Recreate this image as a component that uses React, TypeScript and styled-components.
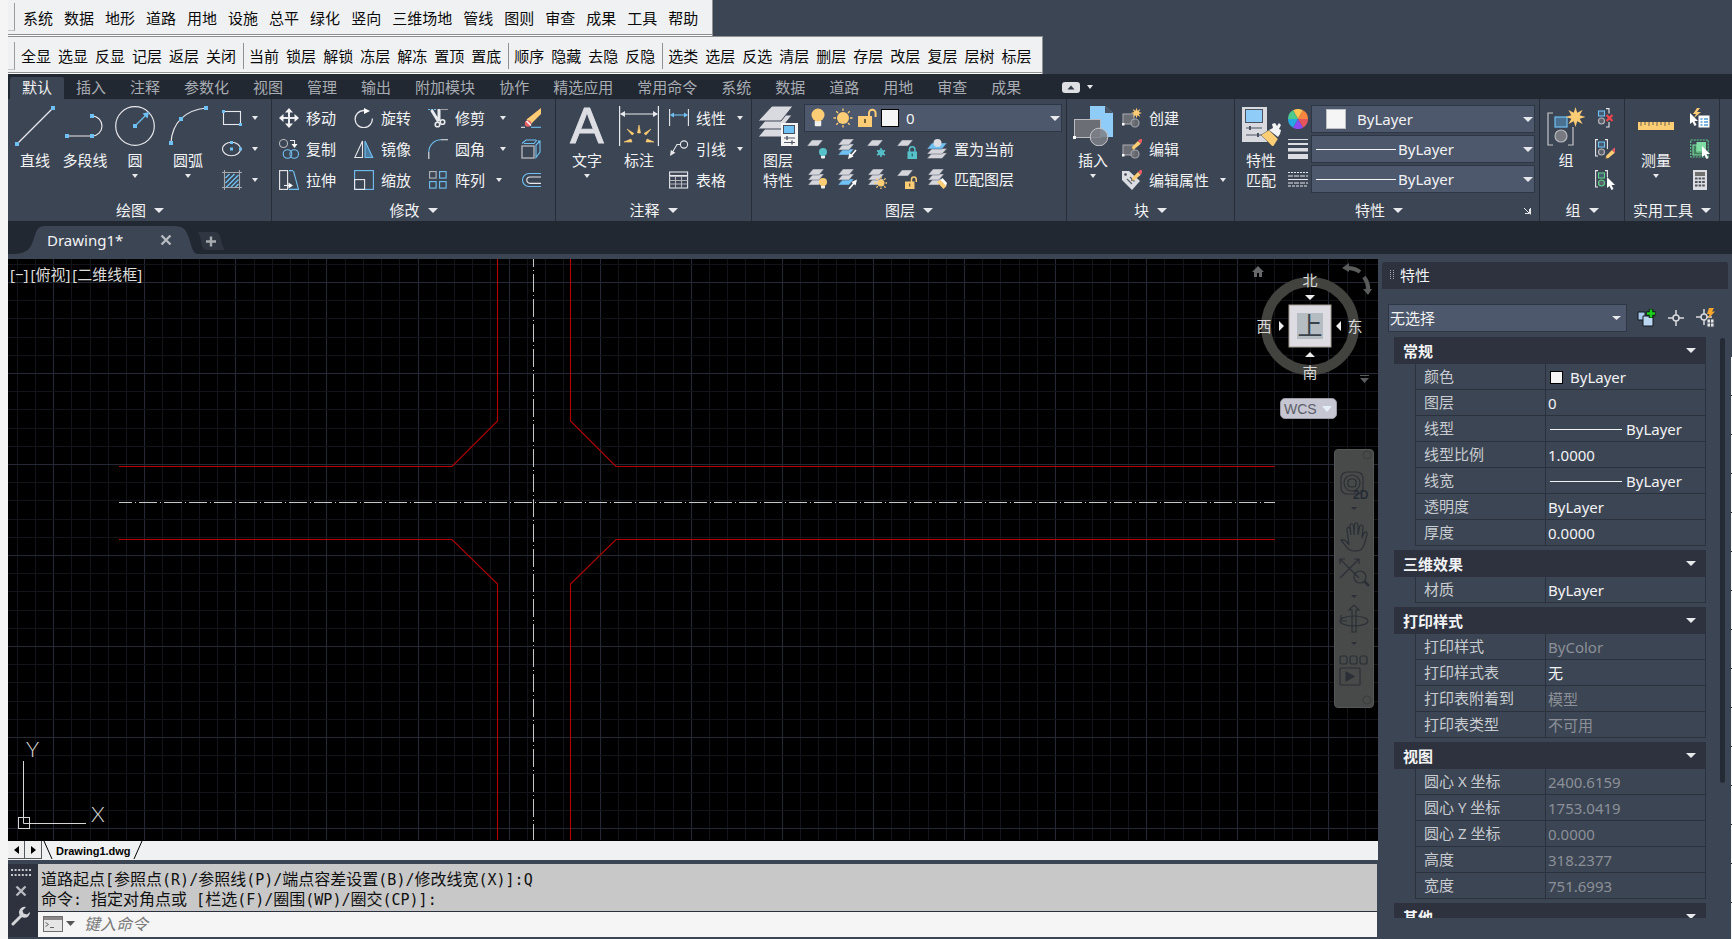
import React from "react";
import styled, { createGlobalStyle } from "styled-components";

const UI_FONT = `"Noto Sans", "Noto Sans CJK SC", sans-serif`;
const c = {
  base: "#3c4553",
  dark: "#222831",
  line: "#262d38",
  header: "#2d323e",
  field: "#4d586c",
  paper: "#f0f1f3",
  white: "#e8e9ed",
  blue: "#70c1f3",
  yellow: "#fccd75",
  grey: "#8b8e95",
  text: "#f2f3f5",
  muted: "#a8acb3",
};

const GlobalStyle = createGlobalStyle`
  * { box-sizing: border-box; }
  body { margin: 0; background: #f5f5f5; font-family: ${UI_FONT}; font-size: 15px; }
  button, select, input { font: inherit; color: inherit; border: 0; padding: 0; margin: 0; background: none; }
  button { cursor: pointer; white-space: nowrap; }
  svg { display: block; flex: none; }
`;

/* ---------- shell ---------- */

const Shell = styled.div`
  height: 100vh;
  min-height: 600px;
  padding-left: 8px;
  display: flex;
  flex-direction: column;
  background: linear-gradient(to right, #f5f5f5 8px, ${c.base} 8px);
  color: ${c.text};
  overflow: hidden;
`;

const Toolbar = styled.nav<{ $end: number }>`
  align-self: flex-start;
  display: flex;
  align-items: center;
  height: ${(p) => (p.$end > 12 ? 36 : 38)}px;
  padding-right: ${(p) => p.$end}px;
  padding-bottom: ${(p) => (p.$end > 12 ? 2 : 0)}px;
  background: ${c.paper};
  color: #0a0a0a;
  border-right: 1px solid #8f9092;
  box-shadow: inset 0 -1px #fafafa, inset 0 -2px #8f9092;
  border-top: ${(p) => (p.$end > 12 ? "0" : "1px solid #8f9092")};
`;

const Grip = styled.span`
  width: 7px;
  height: 28px;
  border-right: 1px solid #9b9c9e;
  border-bottom: 1px solid #c4c5c7;
`;

const MenuItems = styled.div`
  display: flex;
  gap: 11px;
  padding-left: 8px;
`;

const LayerTools = styled.div`
  display: flex;
  padding-left: 1px;
`;

const ToolGroup = styled.div`
  display: flex;
  gap: 7px;
  padding: 0 7px 0 5px;
  line-height: 26px;
  & + & {
    border-left: 1px solid #8f9092;
  }
  &:last-child {
    padding-right: 0;
  }
`;

/* ---------- ribbon ---------- */

const RibbonTabs = styled.div`
  display: flex;
  align-items: flex-end;
  height: 25px;
  flex: none;
  padding-left: 2px;
  background: ${c.dark};
`;

const RibbonTab = styled.button<{ $active?: boolean }>`
  height: 22px;
  padding: 0 12px 2px;
  line-height: 20px;
  border-radius: 2px 2px 0 0;
  color: ${(p) => (p.$active ? c.text : c.muted)};
  background: ${(p) => (p.$active ? c.base : "transparent")};
`;

const TabsMenu = styled.button`
  display: flex;
  align-items: center;
  gap: 7px;
  height: 22px;
  padding-bottom: 2px;
  margin-left: 29px;
`;

const Ribbon = styled.div`
  display: flex;
  flex: none;
  height: 122px;
  padding-left: 1px;
  background: ${c.base};
`;

const Panel = styled.section<{ $w: number }>`
  display: flex;
  flex-direction: column;
  flex: none;
  width: ${(p) => p.$w}px;
  border-right: 1px solid ${c.line};
`;

const PanelBody = styled.div<{ $pad?: number }>`
  display: flex;
  flex: 1;
  padding-left: ${(p) => p.$pad ?? 0}px;
`;

const PanelTitle = styled.button`
  display: flex;
  align-items: center;
  justify-content: center;
  gap: 8px;
  flex: 1;
  height: 21px;
  line-height: 21px;
`;

const PanelFoot = styled.div`
  display: flex;
  align-items: center;
`;

const Launcher = styled.button`
  width: 16px;
`;

const BigButton = styled.button<{ $w: number }>`
  display: flex;
  flex-direction: column;
  align-items: center;
  width: ${(p) => p.$w}px;
  flex: none;
  padding-top: 7px;
  line-height: 20px;
  & > svg:first-child {
    margin-bottom: 4px;
  }
`;

const BigCaret = styled.span`
  padding-top: 4px;
`;

const SmallColumn = styled.div<{ $w?: number; $left?: number; $row?: number; $top?: number }>`
  display: flex;
  flex-direction: column;
  flex: none;
  padding-top: ${(p) => p.$top ?? 3}px;
  margin-left: ${(p) => p.$left ?? 0}px;
  width: ${(p) => (p.$w ? p.$w + "px" : "auto")};
  & > * {
    height: ${(p) => p.$row ?? 31}px;
  }
`;

const SmallButton = styled.button`
  display: flex;
  align-items: center;
  gap: 7px;
`;

const CaretSlot = styled.span<{ $gap: number }>`
  margin-left: ${(p) => p.$gap}px;
`;

const FieldStack = styled.div<{ $top: number; $left: number }>`
  display: flex;
  flex-direction: column;
  flex: 1;
  gap: 2px;
  padding: ${(p) => p.$top}px 4px 0 0;
  margin-left: ${(p) => p.$left}px;
`;

const IconRow = styled.div`
  display: flex;
  align-items: center;
  gap: 10px;
  height: 29px;
  padding-left: 3px;
  & + & {
    height: 31px;
  }
`;

const Combo = styled.label<{ $pad?: number; $gap?: number }>`
  display: flex;
  align-items: center;
  gap: ${(p) => p.$gap ?? 2}px;
  height: 28px;
  padding: 0 1px 0 ${(p) => p.$pad ?? 4}px;
  background: ${c.field};
  border: 1px solid #2d3644;
`;

const ComboSelect = styled.select`
  appearance: none;
  flex: 1;
  min-width: 0;
  height: 26px;
  color: ${c.text};
  outline: none;
`;

const LayerSelect = styled(ComboSelect)`
  padding-left: 3px;
`;

const Swatch = styled.span<{ $size: number; $edge: string }>`
  flex: none;
  width: ${(p) => p.$size}px;
  height: ${(p) => p.$size}px;
  background: #f5f5f5;
  border: 1px solid ${(p) => p.$edge};
`;

const LineSample = styled.span<{ $w: number }>`
  flex: none;
  width: ${(p) => p.$w}px;
  height: 1px;
  background: ${c.text};
`;

/* ---------- document tabs ---------- */

const DocTabs = styled.div`
  display: flex;
  align-items: flex-end;
  flex: none;
  height: 38px;
  background: ${c.dark};
  border-bottom: 5px solid ${c.base};
`;

const DocTab = styled.div`
  position: relative;
  display: flex;
  align-items: center;
  width: 190px;
  height: 28px;
  padding: 0 26px 0 39px;
  justify-content: space-between;
`;

const DocTabShape = styled.svg`
  position: absolute;
  inset: 0;
`;

const DocName = styled.span`
  position: relative;
`;

const CloseDoc = styled.button`
  position: relative;
`;

/* ---------- work area ---------- */

const Work = styled.div`
  display: flex;
  flex: 1;
  min-height: 0;
`;

const LeftSide = styled.div`
  display: flex;
  flex-direction: column;
  flex: 1;
  min-width: 0;
`;

const Viewport = styled.main`
  position: relative;
  flex: 1;
  min-height: 0;
  background: #000;
  overflow: hidden;
`;

const Drawing = styled.svg`
  width: 100%;
  height: 100%;
`;

const ViewLabel = styled.div`
  position: absolute;
  left: 2px;
  top: 4px;
  display: flex;
  gap: 2px;
  line-height: 22px;
  color: #dcdcdc;
`;

const Cube = styled.svg`
  position: absolute;
  top: 0;
  right: 0;
`;

const Wcs = styled.button`
  position: absolute;
  top: 139px;
  right: 41px;
  display: flex;
  align-items: center;
  justify-content: space-between;
  width: 57px;
  height: 21px;
  padding: 0 4px 0 3px;
  border-radius: 5px;
  border: 1px solid #9a9aa4;
  background: #c6c7d2;
  color: #5c5d68;
  font: 14px "Liberation Sans", sans-serif;
`;

const NavBar = styled.div`
  position: absolute;
  top: 190px;
  right: 4px;
  width: 40px;
  height: 259px;
  border-radius: 4px;
  background: #484949;
  border: 1px solid #555756;
`;

const LayoutBar = styled.div`
  display: flex;
  flex: none;
  height: 20px;
  background: ${c.paper};
  border-top: 1px solid #000;
  color: #000;
`;

const LayoutArrow = styled.button`
  display: flex;
  align-items: center;
  justify-content: center;
  width: 17px;
  height: 18px;
  background: #efefef;
  border-right: 1px solid #55585d;
  border-bottom: 1px solid #55585d;
`;

const LayoutTab = styled.button`
  display: flex;
  align-items: center;
  font: bold 11px "Liberation Sans", sans-serif;
`;

/* ---------- command line ---------- */

const Command = styled.section`
  display: flex;
  flex: none;
  height: 79px;
  padding: 4px 1px 2px 0;
`;

const CommandRail = styled.div`
  display: flex;
  flex-direction: column;
  align-items: center;
  gap: 9px;
  width: 30px;
  padding: 5px 4px 0 0;
  background: ${c.header};
`;

const CommandMain = styled.div`
  display: flex;
  flex-direction: column;
  flex: 1;
  min-width: 0;
`;

const History = styled.div`
  height: 48px;
  padding: 6px 3px 0;
  background: #c8c8c8;
  border-bottom: 1px solid #2b313c;
  color: #101010;
  font-size: 16px;
  line-height: 19px;
  white-space: pre;
`;

const Mono = styled.span`
  font-family: "DejaVu Sans Mono", monospace;
  font-size: 15px;
`;

const Prompt = styled.label`
  display: flex;
  align-items: center;
  gap: 3px;
  flex: 1;
  padding: 0 0 2px 5px;
  background: #f5f5f5;
`;

const PromptInput = styled.input`
  flex: 1;
  padding-left: 6px;
  font-size: 16px;
  font-style: italic;
  color: #333;
  outline: none;
  &::placeholder {
    color: #7a7a7a;
    opacity: 1;
  }
`;

/* ---------- properties palette ---------- */

const Palette = styled.aside`
  position: relative;
  display: flex;
  flex-direction: column;
  flex: none;
  width: 354px;
  padding: 3px 0 21px 4px;
  background: ${c.base};
  &::after {
    content: "";
    position: absolute;
    top: 98px;
    right: 0;
    bottom: 0;
    width: 1px;
    background: repeating-linear-gradient(#f5f5f5 0 38px, #222 38px 39px);
  }
`;

const PaletteTitle = styled.h2`
  display: flex;
  align-items: center;
  gap: 6px;
  flex: none;
  height: 27px;
  margin: 0 4px 15px 0;
  padding: 0 0 2px 8px;
  border-radius: 3px 3px 0 0;
  background: ${c.header};
  font-size: 15px;
  font-weight: 400;
`;

const PickRow = styled.div`
  display: flex;
  align-items: center;
  gap: 10px;
  flex: none;
  margin-bottom: 5px;
  padding-left: 6px;
`;

const PickCombo = styled(Combo)`
  width: 239px;
  padding: 0 5px 1px 1px;
`;

const PropArea = styled.div`
  display: flex;
  flex: 1;
  min-height: 0;
  padding-left: 12px;
`;

const PropList = styled.div`
  width: 312px;
  overflow: hidden;
`;

const ScrollThumb = styled.div`
  width: 5px;
  height: 445px;
  max-height: 77%;
  margin: 1px 0 0 14px;
  border-radius: 3px;
  background: #252b35;
`;

const SectionHead = styled.button`
  display: flex;
  align-items: center;
  justify-content: space-between;
  width: 100%;
  height: 27px;
  padding: 0 10px 1px 9px;
  background: ${c.header};
  font-weight: 700;
  color: ${c.text};
`;

const PropTable = styled.table`
  width: 291px;
  margin: 0 0 4px 21px;
  table-layout: fixed;
  border-spacing: 0;
  border-left: 1px solid #2b323d;
`;

const PropName = styled.th`
  width: 130px;
  height: 26px;
  padding: 0 0 2px 8px;
  line-height: 22px;
  text-align: left;
  font-weight: 400;
  color: #c8ccd1;
  border-right: 1px solid #2b323d;
  border-bottom: 1px solid #2b323d;
`;

const PropValue = styled.td<{ $off?: boolean }>`
  height: 26px;
  padding: 1px 0 0 2px;
  line-height: 22px;
  color: ${(p) => (p.$off ? "#8b9098" : c.text)};
  border-right: 1px solid #2b323d;
  border-bottom: 1px solid #2b323d;
`;

const ValueInner = styled.span<{ $gap: number }>`
  display: flex;
  align-items: center;
  gap: ${(p) => p.$gap}px;
  padding-left: 2px;
`;

/* ---------- icons ---------- */

const Caret = ({ w = 6, h = 4, fill = c.white }: { w?: number; h?: number; fill?: string }) => (
  <svg width={w} height={h} viewBox="0 0 10 6" preserveAspectRatio="none" fill={fill}>
    <path d="M0 0h10L5 6z" />
  </svg>
);

const Big = ({ children }: { children: React.ReactNode }) => (
  <svg width="40" height="40" viewBox="0 0 40 40" fill="none" stroke={c.white} strokeWidth="1.2">
    {children}
  </svg>
);

const Small = ({ children }: { children: React.ReactNode }) => (
  <svg width="20" height="20" viewBox="0 0 20 20" fill="none" stroke={c.white} strokeWidth="1.1">
    {children}
  </svg>
);

const Dot = ({ x, y, s = 4 }: { x: number; y: number; s?: number }) => (
  <rect x={x - s / 2} y={y - s / 2} width={s} height={s} fill={c.blue} stroke="none" />
);

const sun = (x: number, y: number, r: number, s: number) => (
  <g>
    <circle cx={x} cy={y} r={r} fill={c.yellow} stroke="none" />
    <path
      d={[0, 45, 90, 135, 180, 225, 270, 315]
        .map((a) => {
          const t = (a * Math.PI) / 180;
          return `M${x + Math.cos(t) * (r + 1)} ${y + Math.sin(t) * (r + 1)}L${x + Math.cos(t) * s} ${y + Math.sin(t) * s}`;
        })
        .join("")}
      stroke={c.yellow}
      strokeWidth="1.3"
    />
  </g>
);

const star = (x: number, y: number, R: number, r: number, n = 8) => (
  <path
    d={
      Array.from({ length: n * 2 }, (_, i) => {
        const t = (i * Math.PI) / n - Math.PI / 2;
        const q = i % 2 ? r : R;
        return `${i ? "L" : "M"}${x + Math.cos(t) * q} ${y + Math.sin(t) * q}`;
      }).join("") + "z"
    }
    fill={c.yellow}
    stroke="none"
  />
);

const sheet = (x: number, y: number, fill = "#d5d6dc") => (
  <path d={`M${x + 5} ${y}h11l-5 6h-11z`} fill={fill} stroke="#4a5160" strokeWidth=".5" />
);

const bulb = (x: number, y: number, r: number, fill: string) => (
  <g stroke="none">
    <rect x={x - r / 2} y={y + r - 1} width={r} height={r * 0.9} rx="1" fill="#f0f0f0" />
    <circle cx={x} cy={y} r={r} fill={fill} />
  </g>
);

const LineIcon = () => (
  <Big>
    <path d="M2 38L38 2" />
    <Dot x={2} y={38} />
    <Dot x={38} y={2} />
  </Big>
);
const PolylineIcon = () => (
  <Big>
    <path d="M2 30h25a10 10 0 0 0 0-20" />
    <Dot x={2} y={30} />
    <Dot x={27} y={30} />
    <Dot x={27} y={10} />
  </Big>
);
const CircleIcon = () => (
  <Big>
    <circle cx="20" cy="20" r="19.3" />
    <path d="M20 20L31 9" stroke={c.blue} />
    <path d="M34 6l-1.500 6.500-5-5z" fill={c.blue} stroke="none" />
    <Dot x={20} y={20} />
  </Big>
);
const ArcIcon = () => (
  <Big>
    <path d="M3 37C4 16 18 4 38 2" />
    <Dot x={3} y={37} />
    <Dot x={13} y={13} />
    <Dot x={38} y={2} />
  </Big>
);
const RectIcon = () => (
  <Small>
    <rect x="1.500" y="3.500" width="17" height="13" />
    <Dot x={1.5} y={3.5} s={3} />
    <Dot x={18.5} y={16.5} s={3} />
  </Small>
);
const EllipseIcon = () => (
  <Small>
    <ellipse cx="9.500" cy="10" rx="9" ry="6.800" />
    <Dot x={9.5} y={3.5} s={3} />
    <Dot x={9.5} y={10} s={3} />
    <Dot x={18.5} y={10} s={3} />
  </Small>
);
const HatchIcon = () => (
  <Small>
    <path d="M3.500 8l4-4M3.500 13l9-9M4 17.500L16.500 5M9 17l7.500-7.500M13 17.500l3.500-3.500" stroke={c.blue} strokeWidth="1.400" />
    <path d="M0 2.500h20M0 17.500h20M2.500 0v20M17.500 0v20" stroke="#a6a8ad" />
  </Small>
);
const MoveIcon = () => (
  <Small>
    <path d="M10 2v16M2 10h16" strokeWidth="2" />
    <path d="M10 0l4 4.500H6zM10 20l4-4.500H6zM0 10l4.500-4v8zM20 10l-4.500-4v8z" fill="#f4f4f4" stroke="none" />
  </Small>
);
const CopyIcon = () => (
  <Small>
    <circle cx="4.500" cy="4.500" r="4" stroke="#b5b7bc" />
    <path d="M11 1.500h4.500V6" />
    <path d="M12.500 5h6l-3 4z" fill="#fff" stroke="none" />
    <circle cx="8.500" cy="15" r="4.300" stroke={c.blue} />
    <circle cx="15.200" cy="15" r="4.300" stroke={c.blue} />
  </Small>
);
const StretchIcon = () => (
  <Small>
    <rect x=".600" y=".600" width="8" height="18.800" />
    <path d="M10 .600h4M14.500 1l5 18.400H10" stroke={c.blue} />
    <path d="M5 15.500h6" />
    <path d="M9.500 12.500l4.500 3-4.500 3z" fill="#fff" stroke="none" />
  </Small>
);
const RotateIcon = () => (
  <Small>
    <path d="M12 2.500H9.500a8.600 8.600 0 1 0 8.800 8" strokeWidth="1.300" />
    <path d="M10 0l6 3-6 3z" fill="#fff" stroke="none" />
  </Small>
);
const MirrorIcon = () => (
  <Small>
    <path d="M8.500 2v16.500H.800z" />
    <path d="M11 2v16.500h7.700z" stroke={c.blue} fill="#4c7ea5" />
  </Small>
);
const ScaleIcon = () => (
  <Small>
    <rect x=".600" y=".600" width="18.800" height="18.800" stroke={c.blue} />
    <rect x=".600" y="9.600" width="10" height="9.800" />
  </Small>
);
const TrimIcon = () => (
  <Small>
    <path d="M0 1.500h9" stroke={c.blue} strokeDasharray="2 1" />
    <path d="M13 1.500h7" stroke="#9b9da3" />
    <path d="M3.500 2l7 11.500M11 1v12" strokeWidth="3" />
    <circle cx="9.500" cy="16.500" r="2.300" strokeWidth="1.600" />
    <circle cx="14.500" cy="14" r="2.300" strokeWidth="1.600" />
  </Small>
);
const FilletIcon = () => (
  <Small>
    <path d="M.800 20v-7M13 .800h7" />
    <path d="M.800 13A12.200 12.200 0 0 1 13 .800" stroke={c.blue} />
  </Small>
);
const ArrayIcon = () => (
  <Small>
    <rect x="1.600" y="1.600" width="6.500" height="6.500" stroke="#b5b7bc" />
    <rect x="11.600" y="1.600" width="6.500" height="6.500" stroke={c.blue} />
    <rect x="1.600" y="11.600" width="6.500" height="6.500" stroke={c.blue} />
    <rect x="11.600" y="11.600" width="6.500" height="6.500" stroke={c.blue} />
  </Small>
);
const EraseIcon = () => (
  <Small>
    <path d="M20 0v6l-10 10-4.500-4.500z" fill={c.yellow} stroke="none" />
    <circle cx="7" cy="15.500" r="3.200" fill="#ec6168" stroke="none" />
    <path d="M5.500 13l4.500 4.500" stroke="#fff" strokeWidth="1.400" />
    <path d="M0 19.300h4" />
    <path d="M10 19.300h10" stroke={c.blue} />
  </Small>
);
const ExplodeIcon = () => (
  <Small>
    <rect x="1" y="7" width="12" height="12" strokeWidth="1.500" stroke="#a9abb1" />
    <path d="M1 4.500L5 1h10M17 2h2v11l-4 5.500V6L19 2M3 4.500h10l3-3.500" stroke={c.blue} />
  </Small>
);
const OffsetIcon = () => (
  <Small>
    <path d="M20 3.500H8a6.500 6.500 0 0 0 0 13h12" stroke={c.blue} />
    <path d="M20 7H9a3.200 3.200 0 0 0 0 6.400h11" />
  </Small>
);
const LetterSvg = styled.svg`
  overflow: visible;
`;
const TextIcon = () => (
  <LetterSvg width="40" height="40" viewBox="0 0 40 40">
    <text
      x="20"
      y="37"
      textAnchor="middle"
      fontFamily="Liberation Sans, sans-serif"
      fontSize="50"
      fill="#dddee3"
      stroke="#dddee3"
      strokeWidth="1"
    >
      A
    </text>
  </LetterSvg>
);
const DimIcon = () => (
  <Big>
    <path d="M.600 0v40M39.400 0v40M2 8h36" />
    <path d="M1 8l5-3v6zM39 8l-5-3v6z" fill={c.white} stroke="none" />
    <path
      d="M18.500 27l1.500-8 1.500 8zM13 29l-5-6 7 4.500zM27 29l5-6-7 4.500zM12 33l-7 3h8zM28 33l7 3h-8z"
      fill={c.yellow}
      stroke={c.yellow}
      strokeWidth=".600"
    />
  </Big>
);
const LinearIcon = () => (
  <Small>
    <path d="M.600 1v17M19.400 1v17" />
    <path d="M2 7h16" stroke={c.blue} />
    <path d="M1 7l4-2.500v5zM19 7l-4-2.500v5z" fill={c.blue} stroke="none" />
  </Small>
);
const LeaderIcon = () => (
  <Small>
    <circle cx="15" cy="5.500" r="3.600" />
    <path d="M11.400 5.500H8L3 14" />
    <path d="M1 17l.800-6 4.600 2.800z" fill={c.white} stroke="none" />
  </Small>
);
const TableIcon = () => (
  <Small>
    <rect x=".600" y="2" width="18" height="16" />
    <path d="M.600 6.500h18M.600 10.500h18M.600 14h18M6.500 6.500V18M12.500 6.500V18" stroke="#b4b6bb" />
    <path d="M.600 5.500h18" />
  </Small>
);
const LayerPropsIcon = () => (
  <svg width="40" height="40" viewBox="0 0 40 40">
    <g fill="#d9dae0" stroke={c.base} strokeWidth="1">
      <path d="M12 17h22L23 31H0z" />
      <path d="M12 9h22L23 23H0z" />
      <path d="M14 0h21L23 15H0z" />
    </g>
    <rect x="23" y="17" width="17" height="23" fill="#f4f4f5" />
    <rect x="25.500" y="19.500" width="11" height="8" fill={c.blue} stroke="#47505e" />
    <path d="M26 32h11M26 36.500h11" stroke="#555d69" />
    <path d="M29 30v4M34 34.500v4" stroke="#555d69" strokeWidth="1.500" />
  </svg>
);
const InsertIcon = () => (
  <svg width="40" height="40" viewBox="0 0 40 40">
    <path d="M17 0h15l8 7v24H17z" fill="#8fccf7" />
    <path d="M32 0v7h8z" fill="#4a5361" />
    <rect x="1.500" y="13.500" width="26" height="18" fill="#6b6e74" stroke="#b9bbc0" />
    <circle cx="26" cy="31" r="8.800" fill="#7d8087" fillOpacity=".85" stroke="#c3c5ca" />
    <rect x="0" y="30" width="3" height="3" fill="#fff" />
  </svg>
);
const BlockShape = () => (
  <g>
    <rect x="1" y="6" width="11" height="10" fill="#6b6e74" stroke="#a5a7ad" />
    <circle cx="13" cy="15" r="4" fill="#6b6e74" fillOpacity=".8" stroke="#a5a7ad" />
    <rect x="0" y="15" width="2.500" height="2.500" fill="#fff" stroke="none" />
  </g>
);
const Pencil = () => (
  <g stroke="none">
    <path d="M9 11l1.500-3.500L16 2l2.800 2.800L12.500 10z" fill={c.yellow} />
    <path d="M16 2l1.500-1.500a1.500 1.500 0 0 1 2.500 2L18.800 4.800z" fill="#ee5a62" />
    <path d="M9 11l.800-2 1.200 1.200z" fill="#333" />
  </g>
);
const CreateIcon = () => (
  <Small>
    <BlockShape />
    {star(14.5, 5, 5.5, 2.5)}
  </Small>
);
const EditIcon = () => (
  <Small>
    <BlockShape />
    <Pencil />
  </Small>
);
const AttrIcon = () => (
  <Small>
    <path d="M0 1h7l11 10-8 9L0 10z" fill="#dcdde2" stroke="none" />
    <circle cx="3.500" cy="4.500" r="1.300" fill={c.base} stroke="none" />
    <path d="M5 9l5 5M8 7l4.500 4.500" stroke="#555d69" />
    <Pencil />
  </Small>
);
const MatchIcon = () => (
  <svg width="40" height="40" viewBox="0 0 40 40">
    <rect x="1" y="1" width="25" height="35" fill="#d9dae0" />
    <rect x="4.500" y="3.500" width="17" height="13" fill="#8fccf7" stroke="#4b5361" />
    <path d="M5 22h16M5 29h16" stroke="#4b5361" />
    <path d="M9 20v4M17 27v4" stroke="#4b5361" strokeWidth="2" />
    <path d="M20 29l8-5 9 9-5 8z" fill={c.yellow} stroke="#4b5361" strokeWidth=".500" />
    <path d="M28 24l4-2-1-4 3-1 2 3 2-3 2 2-2 4 2 1-1 4-2 3z" fill="#f4f4f4" />
  </svg>
);
const wheel = ["#fdc353", "#f9863f", "#e5565c", "#8c4bf2", "#27a8e0", "#4cc98b"];
const WheelIcon = () => (
  <svg width="20" height="20" viewBox="-10 -10 20 20">
    {wheel.map((fill, i) => {
      const a = ((i * 60 - 120) * Math.PI) / 180;
      const b = ((i * 60 - 60) * Math.PI) / 180;
      return (
        <path key={fill} fill={fill} d={`M0 0L${Math.cos(a) * 10} ${Math.sin(a) * 10}A10 10 0 0 1 ${Math.cos(b) * 10} ${Math.sin(b) * 10}z`} />
      );
    })}
  </svg>
);
const WeightIcon = () => (
  <svg width="20" height="20" viewBox="0 0 20 20" fill="#dcdde2">
    <path d="M0 0h20v1H0zM0 4h20v2H0zM0 9h20v3.500H0zM0 15h20v5H0z" />
  </svg>
);
const TypeIcon = () => (
  <Small>
    <path d="M0 3.500h20" strokeDasharray="2 1" />
    <path d="M0 7h20" strokeDasharray="5 1" />
    <path d="M0 10.500h20" />
    <path d="M0 14h20" strokeDasharray="5 1" />
    <path d="M0 17h20" strokeDasharray="3 1" />
  </Small>
);
const GroupIcon = () => (
  <Big>
    <path d="M7 7H2v32h5M22 39h5V21" stroke="#c3c5ca" />
    <rect x="9" y="11" width="12" height="10" fill="#4b7192" stroke={c.blue} />
    <circle cx="15" cy="30" r="6" fill="#777a80" stroke="#b5b7bc" />
    {star(29.5, 11, 10, 4.5)}
  </Big>
);
const GroupParts = ({ tone = c.blue }: { tone?: string }) => (
  <g>
    <rect x="3.500" y="3" width="6" height="5" stroke={tone} fill="#4b7192" fillOpacity=".5" />
    <circle cx="6.500" cy="13" r="3" stroke={tone === c.blue ? "#b5b7bc" : tone} fill="#777a80" fillOpacity=".5" />
  </g>
);
const UngroupIcon = () => (
  <Small>
    <GroupParts />
    <path d="M11 .600h3v5M14 14v5h-3" />
    <path d="M11.500 7l6 6M17.500 7l-6 6" stroke="#f0444c" strokeWidth="2.200" />
  </Small>
);
const GroupEditIcon = () => (
  <Small>
    <GroupParts />
    <path d="M3 .600H.600V17H3M10 .600h2.400V10" />
    <g transform="translate(1 9)">
      <Pencil />
    </g>
  </Small>
);
const Pointer = ({ x, y }: { x: number; y: number }) => (
  <path d={`M${x} ${y}v11l2.500-2 2 4 2-1-2-4h3.500z`} fill="#fff" stroke="none" />
);
const GroupSelectIcon = () => (
  <Small>
    <GroupParts tone="#5fd08a" />
    <path d="M3 .600H.600V17H3M10 .600h2.400V7" />
    <Pointer x={12} y={7} />
  </Small>
);
const RulerIcon = () => (
  <svg width="40" height="40" viewBox="0 0 40 40">
    <rect x="2" y="16" width="36" height="8" fill={c.yellow} />
    <path d="M5 16v4M9 16v3M13 16v4M17 16v3M21 16v4M25 16v3M29 16v4M33 16v3" stroke="#6b6250" />
  </svg>
);
const QuickSelectIcon = () => (
  <Small>
    <path d="M7 0L3 6h3l-2 4 7-6H7l3-4z" fill={c.yellow} stroke="none" />
    <rect x="8.500" y="7.500" width="11" height="12" fill="#fff" stroke="none" />
    <path d="M10.500 11h2M14 11h4M10.500 14h2M14 14h4M10.500 17h2M14 17h4" stroke="#4b9bd6" strokeWidth="1.300" />
    <Pointer x={0} y={5} />
  </Small>
);
const SelectAllIcon = () => (
  <Small>
    <rect x=".700" y="1" width="17.500" height="17" stroke="#5fd08a" strokeDasharray="2 1" />
    <path d="M3 6h4v7h7v3H3z" fill="#3f7f5c" stroke="#7fdda3" />
    <rect x="6.500" y="3" width="9.500" height="9.500" fill="#7fdda3" stroke="none" />
    <Pointer x={12} y={7} />
  </Small>
);
const CalcIcon = () => (
  <Small>
    <rect x="3" y="0" width="14" height="20" fill="#dcdde2" stroke="none" />
    <rect x="5" y="2" width="10" height="4" fill="#70706f" stroke="none" />
    <path d="M5 8.500h10M5 12h10M5 15.500h10" stroke="#50555e" strokeWidth="2.200" strokeDasharray="2.600 1" />
  </Small>
);

const LayerBulbIcon = () => (
  <Small>
    {sheet(0, 1)}
    {bulb(16, 13, 4, "#56c1c9")}
  </Small>
);
const LayerStackIcon = ({ mark }: { mark: "down" | "up" | "bulb" | "sun" | "brush" }) => (
  <Small>
    {sheet(1, 10, mark === "down" || mark === "up" ? c.blue : "#d5d6dc")}
    {sheet(1, 5)}
    {sheet(1, 0)}
    {mark === "down" && (
      <>
        <path d="M19 11l-5 6" stroke="#fff" strokeWidth="1.600" />
        <path d="M11 20l1.500-6 4 3.500z" fill="#fff" stroke="none" />
      </>
    )}
    {mark === "up" && (
      <>
        <path d="M12 20l5-6" stroke="#fff" strokeWidth="1.600" />
        <path d="M20 10.500l-1.500 6-4-3.500z" fill="#fff" stroke="none" />
      </>
    )}
    {mark === "bulb" && bulb(16, 13, 4, c.yellow)}
    {mark === "sun" && sun(14, 14, 3.5, 6.5)}
    {mark === "brush" && (
      <>
        <path d="M10 13l3.500-2 6 6-3 3z" fill={c.yellow} stroke="none" />
        <path d="M13.500 11l2-2 4.500 5-1 3z" fill="#fff" stroke="none" />
      </>
    )}
  </Small>
);
const LayerFreezeIcon = () => (
  <Small>
    {sheet(0, 1)}
    <path d="M14 9v9M10 11.500l8 4.500M18 11.500L10 16" stroke="#56c1c9" strokeWidth="1.500" />
    <circle cx="14" cy="13.500" r="2.500" stroke="#56c1c9" />
  </Small>
);
const LayerLockIcon = () => (
  <Small>
    {sheet(0, 1)}
    <path d="M12.500 13v-2.500a2.700 2.700 0 0 1 5.400 0V13" stroke="#56c1c9" strokeWidth="1.500" />
    <rect x="10.500" y="12.500" width="9.500" height="7.500" fill="#56c1c9" stroke="none" />
    <path d="M15.200 14.500v3" stroke="#22505a" />
  </Small>
);
const LayerUnlockIcon = () => (
  <Small>
    {sheet(0, 1)}
    <path d="M14.500 13v-2.500a2.400 2.400 0 0 1 4.800 0V13" stroke={c.yellow} strokeWidth="1.500" />
    <rect x="8" y="12.500" width="9.500" height="7.500" fill={c.yellow} stroke="none" />
    <path d="M12.700 14.500v3" stroke="#5b4a25" />
  </Small>
);
const MakeCurrentIcon = () => (
  <Small>
    <path d="M5 14h15l-5 5.500H0z" fill="#d5d6dc" stroke="#4a5160" strokeWidth=".500" />
    <path d="M5 9.500h15l-5 5.500H0z" fill="#d5d6dc" stroke="#4a5160" strokeWidth=".500" />
    <path d="M5 4h15l-5 6H0z" fill={c.blue} stroke="#4a5160" strokeWidth=".500" />
    <circle cx="10.500" cy="4" r="4" fill="#dcdde2" stroke="none" />
  </Small>
);
const BulbIcon = () => (
  <svg width="20" height="20" viewBox="0 0 20 20">
    {bulb(9, 7, 6.5, c.yellow)}
  </svg>
);
const SunIcon = () => (
  <svg width="20" height="20" viewBox="0 0 20 20">
    {sun(10, 10, 6, 9.5)}
  </svg>
);
const UnlockIcon = () => (
  <svg width="20" height="20" viewBox="0 0 20 20">
    <path d="M12 8.500V5a3.300 3.300 0 0 1 6.600 0v4" fill="none" stroke={c.yellow} strokeWidth="2" />
    <rect x="1" y="8" width="14" height="11" fill={c.yellow} />
    <path d="M8 11v4" stroke="#514629" strokeWidth="1.600" />
  </svg>
);
const CloseIcon = ({ size = 12 }: { size?: number }) => (
  <svg width={size} height={size} viewBox="0 0 12 12" stroke="#b7babf" strokeWidth="2.400">
    <path d="M1.500 1.500l9 9M10.500 1.500l-9 9" />
  </svg>
);

/* ---------- ribbon building blocks ---------- */

type ToolProps = { icon: React.ReactNode; label?: string; caret?: number; title?: string };

const Tool = ({ icon, label, caret, title }: ToolProps) => (
  <SmallButton aria-label={label ?? title}>
    {icon}
    {label}
    {caret !== undefined && (
      <CaretSlot $gap={caret}>
        <Caret />
      </CaretSlot>
    )}
  </SmallButton>
);

const BigTool = ({ icon, lines, w, caret }: { icon: React.ReactNode; lines: string[]; w: number; caret?: boolean }) => (
  <BigButton $w={w}>
    {icon}
    {lines.map((l) => (
      <span key={l}>{l}</span>
    ))}
    {caret && (
      <BigCaret>
        <Caret />
      </BigCaret>
    )}
  </BigButton>
);

const Foot = ({ label, launcher }: { label: string; launcher?: boolean }) => (
  <PanelFoot>
    <PanelTitle>
      {label}
      <Caret w={10} h={5} />
    </PanelTitle>
    {launcher && (
      <Launcher aria-label="特性设置">
        <svg width="8" height="8" viewBox="0 0 8 8" stroke={c.white} fill="none">
          <path d="M1 1l5 5M6.500 2v4.500H2M7.500 1v6.500" />
        </svg>
      </Launcher>
    )}
  </PanelFoot>
);

const StyleCombo = ({ name, children, pad, gap }: { name: string; children: React.ReactNode; pad: number; gap: number }) => (
  <Combo $pad={pad} $gap={gap}>
    {children}
    <ComboSelect aria-label={name}>
      <option>ByLayer</option>
    </ComboSelect>
    <Caret w={10} h={5} />
  </Combo>
);

/* ---------- drawing ---------- */

const MAJOR_X = 91.08;
const MAJOR_Y = 91;

const Grid = () => {
  const lines: React.ReactNode[] = [];
  for (let i = -2; i < 160; i++) {
    const major = i % 5 === 0;
    const x = Math.round(45.2 + (i * MAJOR_X) / 5) + 0.5;
    lines.push(<line key={"x" + i} x1={x} x2={x} y1="0" y2="100%" stroke={major ? "#252936" : "#12141a"} />);
  }
  for (let i = -1; i < 80; i++) {
    const y = Math.round(23 + (i * MAJOR_Y) / 5) + 0.5;
    const major = i % 5 === 0;
    lines.push(<line key={"y" + i} y1={y} y2={y} x1="0" x2="100%" stroke={major ? "#252936" : "#12141a"} />);
  }
  return <g>{lines}</g>;
};

const Plan = () => (
  <Drawing aria-label="道路平面图">
    <Grid />
    <g fill="none" stroke="#b40000" strokeWidth="1.100">
      <path d="M489.500 0V162L444 207.500H111" />
      <path d="M562.500 0V162L608 207.500H1267" />
      <path d="M489.500 2000V325L444 280.500H111" />
      <path d="M562.500 2000V325L608 280.500H1267" />
    </g>
    <g stroke="#c4c8c8" fill="none">
      <path d="M111 243.500H1267" strokeDasharray="18 3 1 3" strokeDashoffset="5" />
      <path d="M525.500 0V2000" strokeDasharray="18 3 1 3" strokeDashoffset="10" />
    </g>
  </Drawing>
);

const UcsMark = styled.svg`
  position: absolute;
  left: 8px;
  bottom: 4px;
`;

const Ucs = () => (
  <UcsMark width="96" height="104" viewBox="0 -8 96 104" stroke="#d6d6d6" fill="none">
    <path d="M7.500 21v62.500H70" />
    <rect x="2.500" y="77.500" width="11" height="11" />
    <g fill="#d6d6d6" stroke="none" fontFamily="Lato, sans-serif" fontWeight="300" fontSize="22">
      <text x="10" y="17">Y</text>
      <text x="75" y="82">X</text>
    </g>
  </UcsMark>
);

const ViewCube = () => (
  <Cube width="128" height="130" viewBox="0 0 128 130" role="img" aria-label="ViewCube">
    <circle cx="60" cy="67" r="44" fill="none" stroke="#42433f" strokeWidth="10" />
    <path d="M8 7l-6 6h2v5h3v-4h2v4h3v-5h2z" fill="#66686a" />
    <g fill="#ededed">
      <path d="M55 36h10l-5 5zM55 98h10l-5-5zM29 62v10l5-5zM91 62v10l-5-5z" />
    </g>
    <rect x="39" y="46" width="42" height="42" fill="#dcdce2" stroke="#a39c94" />
    <rect x="47" y="54" width="26" height="26" fill="#b5bdc2" />
    <g fontFamily={UI_FONT} textAnchor="middle">
      <text x="60" y="76" fontSize="25" fill="#39424b">上</text>
      <g fontSize="15" fill="#d8d8d8">
        <text x="60" y="27">北</text>
        <text x="60" y="119">南</text>
        <text x="14" y="73">西</text>
        <text x="105" y="73">东</text>
      </g>
    </g>
    <g fill="none" stroke="#5a5c5c" strokeWidth="4">
      <path d="M97 9q8 0 13 4M114 18q5 7 4 13" />
    </g>
    <path d="M92 9l7-5v9zM118 36l-5-6h9zM110 119h9l-4.500 5z" fill="#5a5c5c" />
    <path d="M110 116.500h9" stroke="#5a5c5c" />
  </Cube>
);

const NavTools = () => (
  <svg width="38" height="257" viewBox="0 0 38 257" fill="none" stroke="#2a3036" strokeWidth="1.200">
    <g strokeWidth="1" stroke="#3a3d3e">
      <circle cx="32" cy="5" r="4" />
      <circle cx="32" cy="250" r="4" />
    </g>
    <rect x="6" y="22" width="22" height="22" rx="6" />
    <circle cx="17" cy="33" r="8" />
    <rect x="13" y="29" width="8" height="8" rx="3" />
    <text x="18" y="49" fontFamily="Liberation Sans, sans-serif" fontWeight="700" fontSize="12" fill="#262c36" stroke="none">
      2D
    </text>
    <path d="M16 57h6l-3 3zM16 145h6l-3 3zM16 192h6l-3 3z" fill="#2a3036" stroke="none" />
    <path d="M6 90c4-1 6 2 8 5l-2-15c0-3 2-4 3-1l1 6-1-9c0-3 3-3 3.500 0l.500 9 .500-10c0-3 3-3 3.500 0v10l1.500-8c1-3 4-2 3.500 1l-1 10 2-5c1-2 4-1 3 2-2 5-2 9-4 12-2 4-5 4-9 4-6 0-8-5-13-11z" />
    <path d="M5 109l19 19M24 109L5 128M5 114v-5h5M19 109h5v5" />
    <circle cx="25" cy="127" r="6" />
    <path d="M29 131l5 5" strokeWidth="2.500" />
    <ellipse cx="19" cy="171" rx="14" ry="5" />
    <path d="M17 182v-22h-3l5-5 5 5h-3v22zM6 165v6h6" />
    <rect x="5" y="206" width="7" height="8" rx="2" />
    <rect x="15" y="206" width="7" height="8" rx="2" />
    <rect x="25" y="206" width="7" height="8" rx="2" />
    <rect x="5" y="218" width="20" height="17" rx="1" />
    <path d="M11 222l8 4.500-8 4.500z" fill="#2a3036" />
  </svg>
);

/* ---------- data ---------- */

const menus = ["系统", "数据", "地形", "道路", "用地", "设施", "总平", "绿化", "竖向", "三维场地", "管线", "图则", "审查", "成果", "工具", "帮助"];
const layerTools = [
  ["全显", "选显", "反显", "记层", "返层", "关闭"],
  ["当前", "锁层", "解锁", "冻层", "解冻", "置顶", "置底"],
  ["顺序", "隐藏", "去隐", "反隐"],
  ["选类", "选层", "反选", "清层", "删层", "存层", "改层", "复层", "层树", "标层"],
];
const tabs = ["默认", "插入", "注释", "参数化", "视图", "管理", "输出", "附加模块", "协作", "精选应用", "常用命令", "系统", "数据", "道路", "用地", "审查", "成果"];
const viewControls = ["[−]", "[俯视]", "[二维线框]"];

type Row = { name: string; value: string; off?: boolean; mark?: "swatch" | "line" };
const sections: { title: string; rows: Row[] }[] = [
  {
    title: "常规",
    rows: [
      { name: "颜色", value: "ByLayer", mark: "swatch" },
      { name: "图层", value: "0" },
      { name: "线型", value: "ByLayer", mark: "line" },
      { name: "线型比例", value: "1.0000" },
      { name: "线宽", value: "ByLayer", mark: "line" },
      { name: "透明度", value: "ByLayer" },
      { name: "厚度", value: "0.0000" },
    ],
  },
  { title: "三维效果", rows: [{ name: "材质", value: "ByLayer" }] },
  {
    title: "打印样式",
    rows: [
      { name: "打印样式", value: "ByColor", off: true },
      { name: "打印样式表", value: "无" },
      { name: "打印表附着到", value: "模型", off: true },
      { name: "打印表类型", value: "不可用", off: true },
    ],
  },
  {
    title: "视图",
    rows: [
      { name: "圆心 X 坐标", value: "2400.6159", off: true },
      { name: "圆心 Y 坐标", value: "1753.0419", off: true },
      { name: "圆心 Z 坐标", value: "0.0000", off: true },
      { name: "高度", value: "318.2377", off: true },
      { name: "宽度", value: "751.6993", off: true },
    ],
  },
  { title: "其他", rows: [] },
];

const ConsoleLine = ({ text }: { text: string }) => (
  <div>
    {text.split(/([\x20-\x7e]+)/).map((part, i) => (i % 2 ? <Mono key={i}>{part}</Mono> : part))}
  </div>
);

const CrossHair = () => (
  <g stroke="#d9dade" fill="none" strokeWidth="1.500">
    <path d="M9 1v5M9 12v5M1 9h5M12 9h5" />
    <circle cx="9" cy="9" r="3" />
  </g>
);

export default function App() {
  return (
    <Shell>
      <GlobalStyle />
      <Toolbar $end={14} aria-label="菜单">
        <Grip />
        <MenuItems>
          {menus.map((m) => (
            <button key={m}>{m}</button>
          ))}
        </MenuItems>
      </Toolbar>
      <Toolbar $end={11} aria-label="图层工具">
        <Grip />
        <LayerTools>
          {layerTools.map((g) => (
            <ToolGroup key={g[0]}>
              {g.map((t) => (
                <button key={t}>{t}</button>
              ))}
            </ToolGroup>
          ))}
        </LayerTools>
      </Toolbar>

      <RibbonTabs role="tablist">
        {tabs.map((t, i) => (
          <RibbonTab key={t} role="tab" aria-selected={i === 0} $active={i === 0}>
            {t}
          </RibbonTab>
        ))}
        <TabsMenu aria-label="最小化功能区">
          <svg width="18" height="11" viewBox="0 0 18 11">
            <rect x="0" y="0" width="18" height="11" rx="3" fill="#dedfe2" />
            <path d="M5.500 7.500h7L9 3.500z" fill="#333b46" />
          </svg>
          <Caret />
        </TabsMenu>
      </RibbonTabs>

      <Ribbon>
        <Panel $w={263}>
          <PanelBody $pad={1}>
            <BigTool w={50} icon={<LineIcon />} lines={["直线"]} />
            <BigTool w={50} icon={<PolylineIcon />} lines={["多段线"]} />
            <BigTool w={50} icon={<CircleIcon />} lines={["圆"]} caret />
            <BigTool w={56} icon={<ArcIcon />} lines={["圆弧"]} caret />
            <SmallColumn $left={6}>
              <Tool icon={<RectIcon />} title="矩形" caret={3} />
              <Tool icon={<EllipseIcon />} title="椭圆" caret={3} />
              <Tool icon={<HatchIcon />} title="图案填充" caret={3} />
            </SmallColumn>
          </PanelBody>
          <Foot label="绘图" />
        </Panel>

        <Panel $w={284}>
          <PanelBody $pad={7}>
            <SmallColumn $w={75}>
              <Tool icon={<MoveIcon />} label="移动" />
              <Tool icon={<CopyIcon />} label="复制" />
              <Tool icon={<StretchIcon />} label="拉伸" />
            </SmallColumn>
            <SmallColumn $w={74}>
              <Tool icon={<RotateIcon />} label="旋转" />
              <Tool icon={<MirrorIcon />} label="镜像" />
              <Tool icon={<ScaleIcon />} label="缩放" />
            </SmallColumn>
            <SmallColumn $w={93}>
              <Tool icon={<TrimIcon />} label="修剪" caret={8} />
              <Tool icon={<FilletIcon />} label="圆角" caret={8} />
              <Tool icon={<ArrayIcon />} label="阵列" caret={4} />
            </SmallColumn>
            <SmallColumn>
              <Tool icon={<EraseIcon />} title="删除" />
              <Tool icon={<ExplodeIcon />} title="分解" />
              <Tool icon={<OffsetIcon />} title="偏移" />
            </SmallColumn>
          </PanelBody>
          <Foot label="修改" />
        </Panel>

        <Panel $w={196}>
          <PanelBody $pad={5}>
            <BigTool w={52} icon={<TextIcon />} lines={["文字"]} caret />
            <BigTool w={52} icon={<DimIcon />} lines={["标注"]} />
            <SmallColumn $left={4}>
              <Tool icon={<LinearIcon />} label="线性" caret={4} />
              <Tool icon={<LeaderIcon />} label="引线" caret={4} />
              <Tool icon={<TableIcon />} label="表格" />
            </SmallColumn>
          </PanelBody>
          <Foot label="注释" />
        </Panel>

        <Panel $w={315}>
          <PanelBody $pad={1}>
            <BigTool w={50} icon={<LayerPropsIcon />} lines={["图层", "特性"]} />
            <FieldStack $top={5} $left={1}>
              <Combo $pad={4} $gap={4}>
                <BulbIcon />
                <SunIcon />
                <UnlockIcon />
                <Swatch $size={18} $edge="#000" />
                <LayerSelect aria-label="图层">
                  <option>0</option>
                </LayerSelect>
                <Caret w={10} h={5} />
              </Combo>
              <div>
                <IconRow>
                  <Tool icon={<LayerBulbIcon />} title="关" />
                  <Tool icon={<LayerStackIcon mark="down" />} title="隔离" />
                  <Tool icon={<LayerFreezeIcon />} title="冻结" />
                  <Tool icon={<LayerLockIcon />} title="锁定" />
                  <Tool icon={<MakeCurrentIcon />} label="置为当前" />
                </IconRow>
                <IconRow>
                  <Tool icon={<LayerStackIcon mark="bulb" />} title="打开所有图层" />
                  <Tool icon={<LayerStackIcon mark="up" />} title="取消隔离" />
                  <Tool icon={<LayerStackIcon mark="sun" />} title="解冻所有图层" />
                  <Tool icon={<LayerUnlockIcon />} title="解锁" />
                  <Tool icon={<LayerStackIcon mark="brush" />} label="匹配图层" />
                </IconRow>
              </div>
            </FieldStack>
          </PanelBody>
          <Foot label="图层" />
        </Panel>

        <Panel $w={168}>
          <PanelBody $pad={1}>
            <BigTool w={50} icon={<InsertIcon />} lines={["插入"]} caret />
            <SmallColumn $left={4}>
              <Tool icon={<CreateIcon />} label="创建" />
              <Tool icon={<EditIcon />} label="编辑" />
              <Tool icon={<AttrIcon />} label="编辑属性" caret={4} />
            </SmallColumn>
          </PanelBody>
          <Foot label="块" />
        </Panel>

        <Panel $w={305}>
          <PanelBody $pad={1}>
            <BigTool w={50} icon={<MatchIcon />} lines={["特性", "匹配"]} />
            <SmallColumn $left={2} $row={30} $top={5}>
              <Tool icon={<WheelIcon />} title="对象颜色" />
              <Tool icon={<WeightIcon />} title="线宽" />
              <Tool icon={<TypeIcon />} title="线型" />
            </SmallColumn>
            <FieldStack $top={6} $left={3}>
              <StyleCombo name="颜色" pad={14} gap={11}>
                <Swatch $size={20} $edge="#bdbfc4" />
              </StyleCombo>
              <StyleCombo name="线宽" pad={4} gap={2}>
                <LineSample $w={80} />
              </StyleCombo>
              <StyleCombo name="线型" pad={4} gap={2}>
                <LineSample $w={80} />
              </StyleCombo>
            </FieldStack>
          </PanelBody>
          <Foot label="特性" launcher />
        </Panel>

        <Panel $w={85}>
          <PanelBody>
            <BigTool w={52} icon={<GroupIcon />} lines={["组"]} />
            <SmallColumn $left={3}>
              <Tool icon={<UngroupIcon />} title="解除编组" />
              <Tool icon={<GroupEditIcon />} title="组编辑" />
              <Tool icon={<GroupSelectIcon />} title="启用组选择" />
            </SmallColumn>
          </PanelBody>
          <Foot label="组" />
        </Panel>

        <Panel $w={95}>
          <PanelBody $pad={6}>
            <BigTool w={50} icon={<RulerIcon />} lines={["测量"]} caret />
            <SmallColumn $left={9}>
              <Tool icon={<QuickSelectIcon />} title="快速选择" />
              <Tool icon={<SelectAllIcon />} title="全部选择" />
              <Tool icon={<CalcIcon />} title="快速计算器" />
            </SmallColumn>
          </PanelBody>
          <Foot label="实用工具" />
        </Panel>
      </Ribbon>

      <DocTabs>
        <DocTab>
          <DocTabShape width="190" height="28" viewBox="0 0 190 28" aria-hidden="true">
            <path d="M4 28C20 28 23 22 26 12 29 3 30 0 38 0H166C176 0 178 4 181 12 184 22 185 28 190 28z" fill={c.base} />
          </DocTabShape>
          <DocName>Drawing1*</DocName>
          <CloseDoc aria-label="关闭图形">
            <CloseIcon />
          </CloseDoc>
        </DocTab>
        <button aria-label="新建图形">
          <svg width="28" height="25" viewBox="0 0 28 25">
            <path d="M0 3h16c5 0 6 3 7 8s3 7 3 10H10C4 21 4 17 3 12S1 5 0 3z" fill="#2f3642" />
            <path d="M8 12.500h10M13 7.500v10" stroke="#a8abb0" strokeWidth="2.400" />
          </svg>
        </button>
      </DocTabs>

      <Work>
        <LeftSide>
          <Viewport>
            <Plan />
            <ViewLabel>
              {viewControls.map((v) => (
                <button key={v}>{v}</button>
              ))}
            </ViewLabel>
            <Ucs />
            <ViewCube />
            <Wcs>
              WCS
              <Caret w={10} h={6} fill="#e6eef8" />
            </Wcs>
            <NavBar aria-label="导航栏">
              <NavTools />
            </NavBar>
          </Viewport>
          <LayoutBar>
            <LayoutArrow aria-label="上一个">
              <svg width="5" height="8" viewBox="0 0 5 8">
                <path d="M5 0v8L0 4z" />
              </svg>
            </LayoutArrow>
            <LayoutArrow aria-label="下一个">
              <svg width="5" height="8" viewBox="0 0 5 8">
                <path d="M0 0v8l5-4z" />
              </svg>
            </LayoutArrow>
            <LayoutTab>
              <svg width="14" height="19" viewBox="0 0 14 19" fill="none" stroke="#000">
                <path d="M2 0l8 18" />
              </svg>
              Drawing1.dwg
              <svg width="13" height="19" viewBox="0 0 13 19" fill="none" stroke="#000">
                <path d="M3 18L11 0" />
              </svg>
            </LayoutTab>
          </LayoutBar>
          <Command aria-label="命令行">
            <CommandRail>
              <svg width="20" height="7" viewBox="0 0 20 7" stroke="#c6c8cc" strokeWidth="2" strokeDasharray="2 1.600">
                <path d="M0 1h20M0 6h20" />
              </svg>
              <button aria-label="关闭命令行">
                <CloseIcon />
              </button>
              <button aria-label="自定义">
                <svg width="20" height="20" viewBox="0 0 20 20">
                  <path d="M2 18l8-8" stroke="#d3d5d8" strokeWidth="3" strokeLinecap="round" />
                  <path d="M15 1a5.500 5.500 0 1 0 4 5l-3 2.500-3.500-1-1-3z" fill="#d3d5d8" />
                </svg>
              </button>
            </CommandRail>
            <CommandMain>
              <History>
                <ConsoleLine text="道路起点[参照点(R)/参照线(P)/端点容差设置(B)/修改线宽(X)]:Q" />
                <ConsoleLine text="命令: 指定对角点或 [栏选(F)/圈围(WP)/圈交(CP)]:" />
              </History>
              <Prompt>
                <svg width="20" height="16" viewBox="0 0 20 16">
                  <rect x=".500" y=".500" width="19" height="15" fill="#e6e6e6" stroke="#6f6f6f" />
                  <rect x="1" y="1" width="18" height="3" fill="#8b8687" />
                  <path d="M2.500 6.500l3 2-3 2M7 11.500h4" fill="none" stroke="#666" />
                </svg>
                <Caret w={9} h={5} fill="#555" />
                <PromptInput placeholder="键入命令" aria-label="键入命令" />
              </Prompt>
            </CommandMain>
          </Command>
        </LeftSide>

        <Palette>
          <PaletteTitle>
            <svg width="4" height="10" viewBox="0 0 4 10" stroke="#a9acb2" strokeDasharray="1 1">
              <path d="M.500 0v10M3.500 0v10" />
            </svg>
            特性
          </PaletteTitle>
          <PickRow>
            <PickCombo>
              <ComboSelect aria-label="选择对象">
                <option>无选择</option>
              </ComboSelect>
              <Caret w={9} h={4} />
            </PickCombo>
            <button aria-label="切换 PICKADD">
              <svg width="20" height="18" viewBox="0 0 20 18">
                <path d="M1 3h7v8H1z" fill="#a9c8ea" stroke="#111820" />
                <path d="M6 7h10v10H6z" fill="#bcd6f2" stroke="#111820" />
                <path d="M14 0v9M9.500 4.500h9" stroke="#0b1a10" strokeWidth="4.500" />
                <path d="M14 .500v8M10 4.500h8" stroke="#1bd01b" strokeWidth="2.600" />
              </svg>
            </button>
            <button aria-label="选择对象">
              <svg width="18" height="18" viewBox="0 0 18 18">
                <CrossHair />
              </svg>
            </button>
            <button aria-label="快速选择">
              <svg width="22" height="20" viewBox="0 0 22 20">
                <CrossHair />
                <path d="M14 0h5l-2 3.500h3L13 11l1.500-5H12z" fill="#f7a62c" />
                <path d="M12 11h7v8h-7z" fill="#e6e6e6" stroke="#4b5361" />
                <path d="M12 15h7M15.500 11v8" stroke="#4b5361" />
              </svg>
            </button>
          </PickRow>
          <PropArea>
            <PropList>
              {sections.map((s) => (
                <section key={s.title}>
                  <SectionHead>
                    {s.title}
                    <Caret w={10} h={5} />
                  </SectionHead>
                  {s.rows.length > 0 && (
                    <PropTable>
                      <tbody>
                        {s.rows.map((r) => (
                          <tr key={r.name}>
                            <PropName scope="row">{r.name}</PropName>
                            <PropValue $off={r.off}>
                              {r.mark ? (
                                <ValueInner $gap={r.mark === "line" ? 4 : 7}>
                                  {r.mark === "line" ? <LineSample $w={72} /> : <Swatch $size={13} $edge="#000" />}
                                  {r.value}
                                </ValueInner>
                              ) : (
                                r.value
                              )}
                            </PropValue>
                          </tr>
                        ))}
                      </tbody>
                    </PropTable>
                  )}
                </section>
              ))}
            </PropList>
            <ScrollThumb />
          </PropArea>
        </Palette>
      </Work>
    </Shell>
  );
}
